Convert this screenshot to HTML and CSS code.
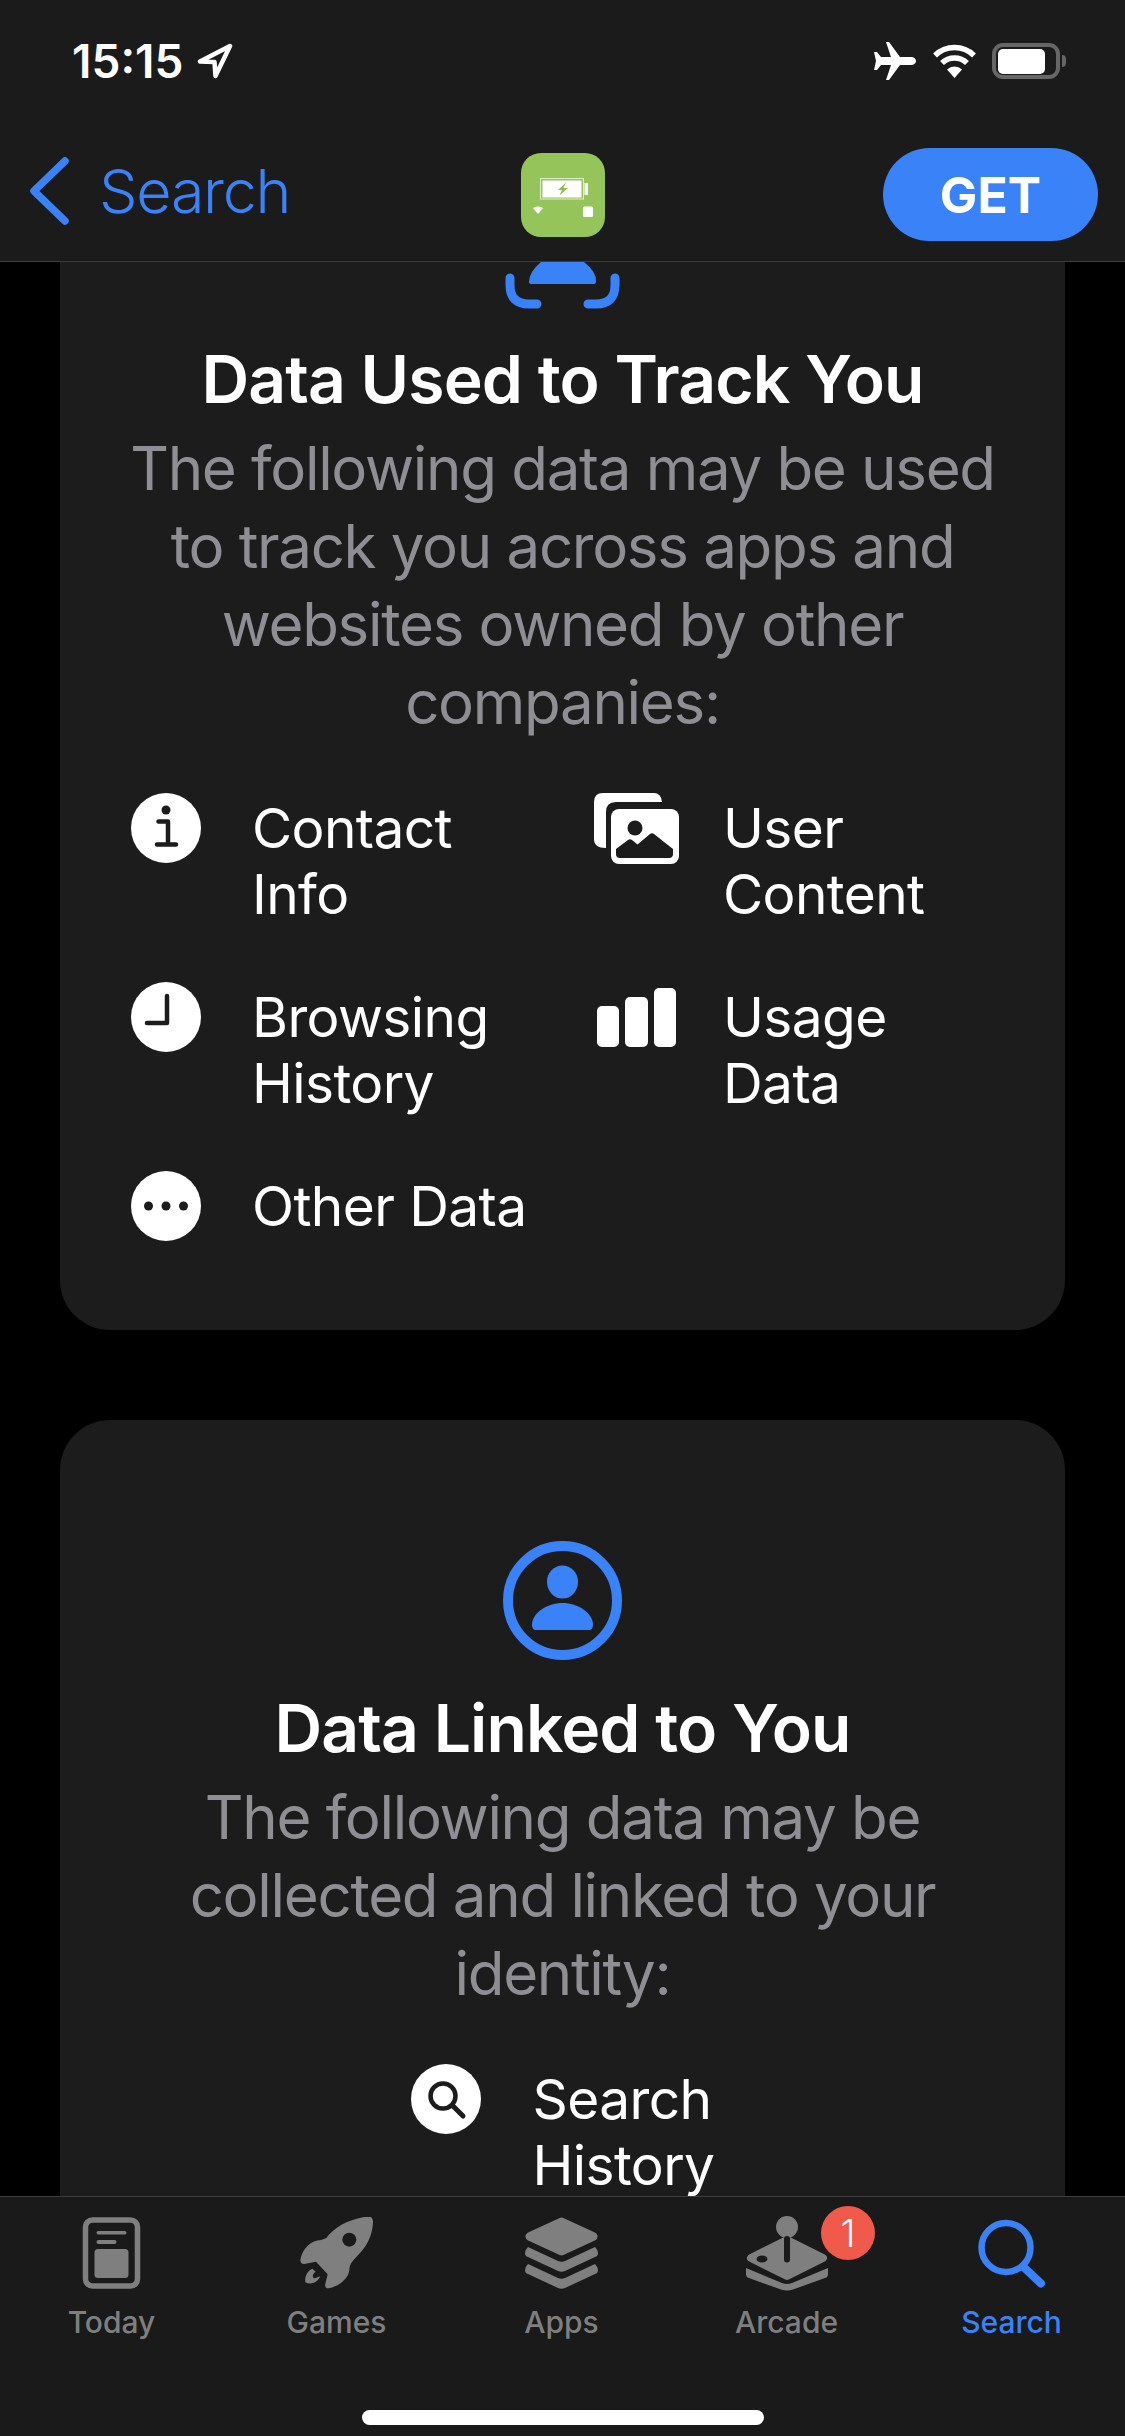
FILE: index.html
```html
<!DOCTYPE html>
<html lang="en">
<head>
<meta charset="utf-8">
<title>App Privacy</title>
<link rel="stylesheet" href="styles.css">
</head>
<body>
<div class="screen">
  <header class="top">
    <div class="status">
      <div class="status-left">
        <span class="clock">15:15</span>
        <svg class="loc" viewBox="0 0 36 36"><path d="M33 3 L3 18.500 L17.500 19 L18.500 33 Z" fill="none" stroke="#fff" stroke-width="4.500" stroke-linejoin="round"/></svg>
      </div>
      <div class="status-right">
        <svg class="plane" viewBox="0 0 42 38"><path d="M12 0 L15 0 L26 15 L37 15 C40 15 42 17 42 19 C42 21 40 23 37 23 L26 23 L15 38 L12 38 L17 23 L7 23 L3 28 L0 28 L2 19 L0 10 L3 10 L7 15 L17 15 Z" fill="#fff"/></svg>
        <svg class="wifi" viewBox="0 0 45 34"><path d="M3 11.500 A28 28 0 0 1 42 11.500" fill="none" stroke="#fff" stroke-width="5.500"/><path d="M10 19 A18 18 0 0 1 35 19" fill="none" stroke="#fff" stroke-width="5.500"/><path d="M22.500 34 L15 25.500 A11 11 0 0 1 30 25.500 Z" fill="#fff"/></svg>
        <div class="battery"><div class="battery-body"><div class="battery-fill"></div></div><div class="battery-nub"></div></div>
      </div>
    </div>
    <nav class="navbar">
      <div class="back">
        <svg class="chevron" viewBox="0 0 41 70"><path d="M36 5 L5 35 L36 65" fill="none" stroke="#3a82f7" stroke-width="7.500" stroke-linecap="round" stroke-linejoin="round"/></svg>
        <span class="back-label">Search</span>
      </div>
      <div class="app-icon">
        <svg viewBox="0 0 84 84" width="84" height="84"><rect x="19.500" y="25.500" width="43" height="20.500" fill="none" stroke="#dfeccb" stroke-width="1"/><rect x="21.500" y="27.500" width="39" height="17" fill="#fff"/><rect x="63.500" y="30" width="3.500" height="12" fill="#fff"/><path d="M45 29.500 L37 37 L41 37 L38.500 42.500 L47 35 L42.500 35 Z" fill="#8dbd4f"/><path d="M12 55 Q17 52 22 55 L17 61 Z" fill="#fff"/><rect x="62" y="53.500" width="10" height="10.500" rx="1.500" fill="#fff"/></svg>
      </div>
      <div class="get">GET</div>
    </nav>
  </header>

  <main class="scroll">
    <section class="card card-clipped">
      <div class="hero-clip">
        <svg class="track-icon" viewBox="0 0 115 47"><path d="M5 16 L5 23 Q5 42 24 42 L32 42 M110 16 L110 23 Q110 42 91 42 L83 42" fill="none" stroke="#3a82f7" stroke-width="9" stroke-linecap="round"/><path d="M36 0 L79 0 Q92 10 91 20 Q91 22 88 22 L27 22 Q24 22 24 20 Q24 10 36 0 Z" fill="#3a82f7"/></svg>
      </div>
      <h2 class="title">Data Used to Track You</h2>
      <p class="sub sub-wide">The following data may be used to track you across apps and websites owned by other companies:</p>
      <div class="grid">
        <div class="item"><div class="ico">
          <svg viewBox="0 0 70 70" class="ic70"><circle cx="35" cy="35" r="35" fill="#fff"/><circle cx="35" cy="17" r="4.500" fill="#1c1c1c"/><path d="M27.500 28.500 L37 28.500 L37 50 M26 51.500 L45 51.500" fill="none" stroke="#1c1c1c" stroke-width="4.500" stroke-linecap="round" stroke-linejoin="round"/></svg>
        </div><div class="label">Contact<br>Info</div></div>
        <div class="item"><div class="ico">
          <svg viewBox="0 0 85 71" class="ic85"><path d="M9 0 L60 0 Q67 0 68 9 L22 9 Q12 9 12 19 L12 55 Q0 55 0 46 L0 9 Q0 0 9 0 Z" fill="#fff"/><rect x="17" y="16" width="68" height="55" rx="8" fill="#fff"/><circle cx="41" cy="35" r="7.500" fill="#1c1c1c"/><path d="M22 56 L34 47 Q36 45.500 38 47 L43.500 51.500 L56 41 Q58 39.500 60 41 L79 56 L79 61 Q79 65 75 65 L26 65 Q22 65 22 61 Z" fill="#1c1c1c"/></svg>
        </div><div class="label">User<br>Content</div></div>
        <div class="item"><div class="ico">
          <svg viewBox="0 0 70 70" class="ic70"><circle cx="35" cy="35" r="35" fill="#fff"/><path d="M36 14 L36 41 L16 41" fill="none" stroke="#1c1c1c" stroke-width="4.500" stroke-linecap="round" stroke-linejoin="round"/></svg>
        </div><div class="label">Browsing<br>History</div></div>
        <div class="item"><div class="ico">
          <svg viewBox="0 0 79 59" class="ic-bars"><rect x="0" y="18" width="22" height="41" rx="5" fill="#fff"/><rect x="28" y="9" width="23" height="50" rx="5" fill="#fff"/><rect x="57" y="0" width="22" height="59" rx="5" fill="#fff"/></svg>
        </div><div class="label">Usage<br>Data</div></div>
        <div class="item"><div class="ico">
          <svg viewBox="0 0 70 70" class="ic70"><circle cx="35" cy="35" r="35" fill="#fff"/><circle cx="17.500" cy="35" r="4.500" fill="#1c1c1c"/><circle cx="35" cy="35" r="4.500" fill="#1c1c1c"/><circle cx="52.500" cy="35" r="4.500" fill="#1c1c1c"/></svg>
        </div><div class="label label-one">Other Data</div></div>
      </div>
    </section>

    <section class="card card-linked">
      <svg class="person-icon" viewBox="0 0 119 119"><circle cx="59.500" cy="59.500" r="54.500" fill="none" stroke="#3a82f7" stroke-width="10"/><ellipse cx="59.500" cy="41" rx="15.500" ry="16.500" fill="#3a82f7"/><path d="M29 84 C29 72 44 62 59.500 62 C75 62 90 72 90 84 Q90 89 86 89 L33 89 Q29 89 29 84 Z" fill="#3a82f7"/></svg>
      <h2 class="title title-linked">Data Linked to You</h2>
      <p class="sub sub-narrow">The following data may be collected and linked to your identity:</p>
      <div class="single">
        <div class="item"><div class="ico">
          <svg viewBox="0 0 70 70" class="ic70"><circle cx="35" cy="35" r="35" fill="#fff"/><circle cx="32" cy="32" r="12.500" fill="none" stroke="#1c1c1c" stroke-width="4.500"/><path d="M41.500 41.500 L52 52" stroke="#1c1c1c" stroke-width="5" stroke-linecap="round"/></svg>
        </div><div class="label">Search<br>History</div></div>
      </div>
    </section>
  </main>

  <footer class="tabbar">
    <div class="tabs">
      <div class="tab">
        <svg class="tab-ico" viewBox="0 0 73 73"><rect x="10.500" y="3" width="52" height="66" rx="7" fill="none" stroke="#7f7f7f" stroke-width="5.500"/><rect x="21.500" y="14" width="30" height="3.500" rx="1.750" fill="#7f7f7f"/><rect x="21.500" y="23" width="20" height="4" rx="2" fill="#7f7f7f"/><rect x="19.500" y="32" width="34" height="29" rx="3.500" fill="#7f7f7f"/></svg>
        <span class="tab-label">Today</span>
      </div>
      <div class="tab">
        <svg class="tab-ico" viewBox="27 36 219 219"><path d="M230 34 C242 33 247 42 246 55 C243 95 228 125 194 158 C180 172 176 180 175 195 C174 218 145 245 112 250 C104 251 101 243 103 236 L110 208 L75 170 L40 177 C31 178 26 171 29 160 C36 130 60 105 90 105 L105 100 C130 65 175 42 230 34 Z" fill="#7f7f7f"/><circle cx="175" cy="104" r="21" fill="#1a1a1a"/><path d="M64 191 C48 198 41 215 43 232 C58 240 78 235 88 214 L72 220 C64 220 62 208 74 200 Z" fill="#7f7f7f"/></svg>
        <span class="tab-label">Games</span>
      </div>
      <div class="tab">
        <svg class="tab-ico" viewBox="0 0 73 73"><path d="M36.500 5 L68 19.500 L36.500 34 L5 19.500 Z" fill="#7f7f7f" stroke="#7f7f7f" stroke-width="9" stroke-linejoin="round"/><path d="M3 30 L33 44 Q36.500 45.500 40 44 L70 30 Q73 33 73 36 Q73 39 70 40 L40 54 Q36.500 55.500 33 54 L3 40 Q0 39 0 36 Q0 33 3 30 Z" fill="#7f7f7f"/><path d="M3 47 L33 61 Q36.500 62.500 40 61 L70 47 Q73 50 73 53 Q73 56 70 57 L40 71 Q36.500 72.500 33 71 L3 57 Q0 56 0 53 Q0 50 3 47 Z" fill="#7f7f7f"/></svg>
        <span class="tab-label">Apps</span>
      </div>
      <div class="tab">
        <svg class="tab-ico tab-ico-arcade" viewBox="0 0 82 75"><circle cx="41" cy="11" r="11" fill="#7f7f7f"/><path d="M5 42 L41 24 L77 42 L41 60 Z" fill="#7f7f7f" stroke="#7f7f7f" stroke-width="8" stroke-linejoin="round"/><path d="M41 23 L41 43.500" stroke="#1a1a1a" stroke-width="6" stroke-linecap="round"/><ellipse cx="16" cy="43" rx="5.500" ry="3.500" fill="#1a1a1a"/><path d="M0 52 L36 67 Q41 69 46 67 L82 52 L82 58 Q82 61 79 62 L47 73.500 Q41 75.500 35 73.500 L3 62 Q0 61 0 58 Z" fill="#7f7f7f"/></svg>
        <span class="badge">1</span>
        <span class="tab-label">Arcade</span>
      </div>
      <div class="tab tab-active">
        <svg class="tab-ico" viewBox="0 0 73 73"><circle cx="31" cy="30.500" r="24.500" fill="none" stroke="#3a82f7" stroke-width="6.500"/><path d="M48 49.500 L66 66.500" stroke="#3a82f7" stroke-width="8" stroke-linecap="round"/></svg>
        <span class="tab-label">Search</span>
      </div>
    </div>
    <div class="home"></div>
  </footer>
</div>
</body>
</html>
```
FILE: styles.css
```css
* { box-sizing: border-box; }
html, body { margin: 0; padding: 0; }
body { background: #000; font-family: "Inter", "Liberation Sans", sans-serif; color: #fff; }
.screen { width: 1125px; height: 2436px; display: flex; flex-direction: column; overflow: hidden; background: #000; }

.top { height: 262px; background: #1b1b1b; border-bottom: 1px solid #3c3c3c; flex: none; }
.status { display: flex; justify-content: space-between; align-items: center; height: 60px; margin-top: 31px; padding: 0 59px 0 72px; }
.status-left { display: flex; align-items: center; gap: 14px; }
.clock { font-size: 46px; font-weight: 600; line-height: 60px; }
.loc { width: 36px; height: 36px; display: block; }
.status-right { display: flex; align-items: center; }
.plane { width: 42px; height: 38px; display: block; margin-right: 16px; }
.wifi { width: 45px; height: 34px; display: block; margin-right: 15px; }
.battery { display: flex; align-items: center; gap: 2px; }
.battery-body { width: 68px; height: 36px; border: 4px solid #666; border-radius: 11px; padding: 1.5px 2px; }
.battery-fill { width: 84%; height: 100%; background: #fff; border-radius: 5px; }
.battery-nub { width: 4px; height: 12px; background: #666; border-radius: 0 4px 4px 0; }

.navbar { display: grid; grid-template-columns: 1fr 84px 1fr; align-items: center; height: 93px; margin-top: 57px; padding: 0 27px 0 28px; }
.back { display: flex; align-items: center; gap: 29px; padding-bottom: 7px; margin-left: 1px; }
.chevron { width: 41px; height: 70px; display: block; flex: none; }
.back-label { font-size: 61px; color: #3a82f7; line-height: 86px; font-weight: 350; letter-spacing: -1.3px; }
.app-icon { width: 84px; height: 84px; border-radius: 20px; background: #95c45a; overflow: hidden; }
.app-icon svg { display: block; }
.get { justify-self: end; width: 215px; height: 93px; border-radius: 47px; background: #3a82f7; font-size: 50px; font-weight: 700; display: flex; align-items: center; justify-content: center; }

.scroll { flex: 1; min-height: 0; overflow: hidden; display: flex; flex-direction: column; align-items: center; gap: 90px; }
.card { width: 1005px; background: #1c1c1c; flex: none; }
.card-clipped { height: 1068px; border-radius: 0 0 50px 50px; display: flex; flex-direction: column; align-items: center; }
.hero-clip { height: 47px; flex: none; }
.track-icon { width: 115px; height: 47px; display: block; }
.title { margin: 0; font-size: 66px; font-weight: 600; line-height: 80px; text-align: center; letter-spacing: -0.9px; }
.card-clipped .title { margin-top: 30px; }
.sub { margin: 10px 0 0; font-size: 60px; line-height: 78px; color: #8e8e93; text-align: center; font-weight: 380; letter-spacing: -1.3px; }
.sub-wide { width: 880px; }
.sub-narrow { width: 800px; }

.grid { display: grid; grid-template-columns: 471px 1fr; row-gap: 55px; width: 100%; padding-left: 63px; margin-top: 52px; }
.item { display: flex; gap: 44px; align-items: flex-start; }
.ico { width: 85px; display: flex; justify-content: center; flex: none; }
.ic70 { width: 70px; height: 70px; display: block; }
.ic85 { width: 85px; height: 71px; display: block; }
.ic-bars { width: 79px; height: 59px; display: block; margin-top: 6px; }
.label { font-size: 55px; line-height: 66px; font-weight: 380; letter-spacing: -0.6px; margin-top: 2px; }
.label-one { white-space: nowrap; }

.card-linked { flex: 1 0 auto; border-radius: 50px 50px 0 0; padding-top: 121px; display: flex; flex-direction: column; align-items: center; }
.person-icon { width: 119px; height: 119px; display: block; }
.title-linked { margin-top: 28px; }
.single { margin-top: 52px; display: flex; justify-content: center; }
.single .item { width: 318px; }

.tabbar { height: 240px; flex: none; background: #1a1a1a; border-top: 1px solid #3c3c3c; }
.tabs { display: grid; grid-template-columns: repeat(5, 225px); margin-left: -1px; }
.tab { display: flex; flex-direction: column; align-items: center; padding-top: 20px; position: relative; }
.tab-ico { width: 73px; height: 73px; display: block; }
.tab-ico-arcade { width: 82px; height: 75px; margin-top: -1px; margin-bottom: -1px; }
.tab-label { font-size: 30px; font-weight: 450; line-height: 36px; margin-top: 14px; color: #7f7f7f; }
.tab-active .tab-label { color: #3a82f7; }
.badge { position: absolute; left: 147px; top: 9px; width: 54px; height: 54px; border-radius: 50%; background: #ef5a4a; color: #fff; font-size: 38px; font-weight: 300; display: flex; align-items: center; justify-content: center; }
.home { width: 402px; height: 15px; border-radius: 8px; background: #fff; margin: 70px auto 0; }
```
